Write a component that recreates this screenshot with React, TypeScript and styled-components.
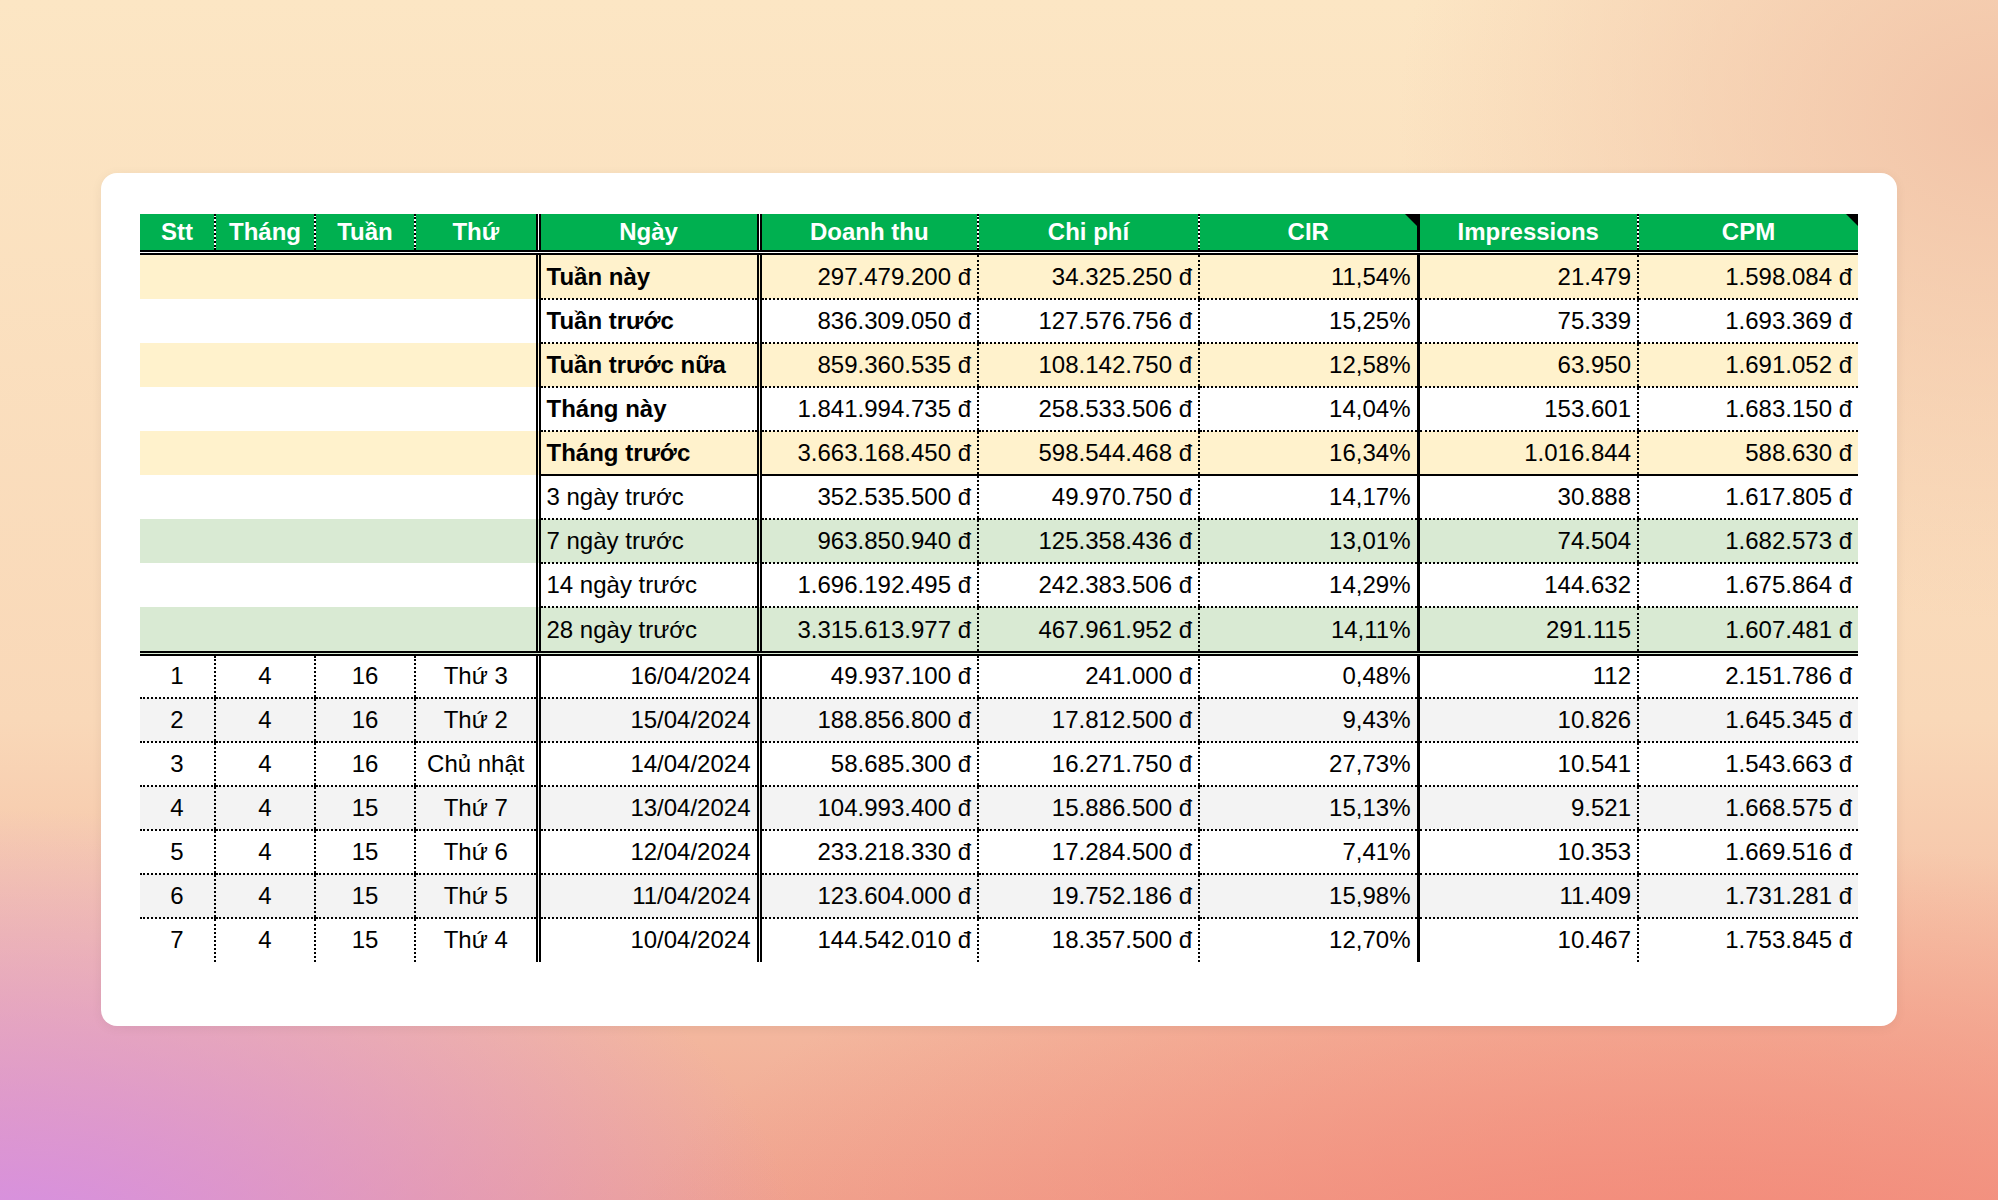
import styled, { createGlobalStyle } from 'styled-components'

const Global = createGlobalStyle`
  html, body { margin: 0; padding: 0; }
  body {
    width: 1998px;
    height: 1200px;
    overflow: hidden;
    font-family: "Liberation Sans", Arial, sans-serif;
    background:
      radial-gradient(ellipse 800px 450px at 0% 105%, #d48ee8 0%, rgba(212,142,232,0) 100%),
      radial-gradient(ellipse 1100px 480px at 85% 110%, #f48676 0%, rgba(244,134,118,0) 100%),
      radial-gradient(ellipse 600px 500px at 100% 10%, #f2c4a8 0%, rgba(242,196,168,0) 100%),
      linear-gradient(180deg, #fce6c4 0%, #f9d8b8 60%, #f0a590 100%);
  }
`

const Page = styled.div`
  display: flex;
  justify-content: center;
  padding-top: 173px;
`

const Card = styled.div`
  width: 1796px;
  height: 853px;
  box-sizing: border-box;
  background: #fff;
  border-radius: 16px;
  padding: 41px 39px 0 39px;
  box-shadow: 0 2px 12px rgba(0, 0, 0, 0.06);
`

const Table = styled.table`
  border-collapse: collapse;
  table-layout: fixed;
  width: 1718px;
  font-size: 24px;
  color: #000;
`

const Head = styled.th<{ $left?: string; $corner?: boolean }>`
  position: relative;
  height: 36px;
  padding: 0;
  background: #00b050;
  color: #fff;
  font-weight: 700;
  font-size: 24px;
  text-align: center;
  border-left: ${p => p.$left ?? '2px dotted #000'};
  border-bottom: 5px double #000;
  &:first-child { border-left: none; }
  &::after {
    content: '';
    display: ${p => (p.$corner ? 'block' : 'none')};
    position: absolute;
    top: 0;
    right: 0;
    border-top: 12px solid #000;
    border-left: 12px solid transparent;
  }
`

const Blank = styled.td<{ $bg: string }>`
  background: ${p => p.$bg};
  height: 44px;
  padding: 0;
`

const Cell = styled.td<{ $bg: string; $left?: string; $align?: string; $bold?: boolean; $bottom?: string }>`
  background: ${p => p.$bg};
  height: 44px;
  box-sizing: border-box;
  padding: 0 6px;
  white-space: nowrap;
  text-align: ${p => p.$align ?? 'right'};
  font-weight: ${p => (p.$bold ? 700 : 400)};
  border-left: ${p => p.$left ?? '2px dotted #000'};
  border-bottom: ${p => p.$bottom ?? '2px dotted #000'};
  &:first-child { border-left: none; }
`

const DOUBLE = '5px double #000'
const THICK = '3px solid #000'

const cols = [75, 100, 100, 123, 221, 219, 221, 219, 220, 220]
const leftBorder = (i: number) =>
  i === 4 || i === 5 ? DOUBLE : i === 8 ? THICK : undefined

const heads = ['Stt', 'Tháng', 'Tuần', 'Thứ', 'Ngày', 'Doanh thu', 'Chi phí', 'CIR', 'Impressions', 'CPM']

const YELLOW = '#fff2cc'
const GREEN = '#d9ead3'
const GREY = '#f3f3f3'

const summary: [string, boolean, string, string[]][] = [
  ['Tuần này', true, YELLOW, ['297.479.200 đ', '34.325.250 đ', '11,54%', '21.479', '1.598.084 đ']],
  ['Tuần trước', true, '#fff', ['836.309.050 đ', '127.576.756 đ', '15,25%', '75.339', '1.693.369 đ']],
  ['Tuần trước nữa', true, YELLOW, ['859.360.535 đ', '108.142.750 đ', '12,58%', '63.950', '1.691.052 đ']],
  ['Tháng này', true, '#fff', ['1.841.994.735 đ', '258.533.506 đ', '14,04%', '153.601', '1.683.150 đ']],
  ['Tháng trước', true, YELLOW, ['3.663.168.450 đ', '598.544.468 đ', '16,34%', '1.016.844', '588.630 đ']],
  ['3 ngày trước', false, '#fff', ['352.535.500 đ', '49.970.750 đ', '14,17%', '30.888', '1.617.805 đ']],
  ['7 ngày trước', false, GREEN, ['963.850.940 đ', '125.358.436 đ', '13,01%', '74.504', '1.682.573 đ']],
  ['14 ngày trước', false, '#fff', ['1.696.192.495 đ', '242.383.506 đ', '14,29%', '144.632', '1.675.864 đ']],
  ['28 ngày trước', false, GREEN, ['3.315.613.977 đ', '467.961.952 đ', '14,11%', '291.115', '1.607.481 đ']],
]

const daily: string[][] = [
  ['1', '4', '16', 'Thứ 3', '16/04/2024', '49.937.100 đ', '241.000 đ', '0,48%', '112', '2.151.786 đ'],
  ['2', '4', '16', 'Thứ 2', '15/04/2024', '188.856.800 đ', '17.812.500 đ', '9,43%', '10.826', '1.645.345 đ'],
  ['3', '4', '16', 'Chủ nhật', '14/04/2024', '58.685.300 đ', '16.271.750 đ', '27,73%', '10.541', '1.543.663 đ'],
  ['4', '4', '15', 'Thứ 7', '13/04/2024', '104.993.400 đ', '15.886.500 đ', '15,13%', '9.521', '1.668.575 đ'],
  ['5', '4', '15', 'Thứ 6', '12/04/2024', '233.218.330 đ', '17.284.500 đ', '7,41%', '10.353', '1.669.516 đ'],
  ['6', '4', '15', 'Thứ 5', '11/04/2024', '123.604.000 đ', '19.752.186 đ', '15,98%', '11.409', '1.731.281 đ'],
  ['7', '4', '15', 'Thứ 4', '10/04/2024', '144.542.010 đ', '18.357.500 đ', '12,70%', '10.467', '1.753.845 đ'],
]

export default function App() {
  return (
    <>
      <Global />
      <Page>
        <Card>
          <Table>
            <colgroup>
              {cols.map((w, i) => <col key={i} style={{ width: w }} />)}
            </colgroup>
            <thead>
              <tr>
                {heads.map((h, i) => (
                  <Head key={h} $left={leftBorder(i)} $corner={h === 'CIR' || h === 'CPM'}>{h}</Head>
                ))}
              </tr>
            </thead>
            <tbody>
              {summary.map(([label, bold, bg, vals], r) => {
                const bottom = r === 4 ? '2px solid #000' : r === 8 ? DOUBLE : undefined
                return (
                  <tr key={label}>
                    <Blank colSpan={4} $bg={bg} style={r === 8 ? { borderBottom: DOUBLE } : undefined} />
                    <Cell $bg={bg} $left={DOUBLE} $align="left" $bold={bold} $bottom={bottom}>{label}</Cell>
                    {vals.map((v, i) => (
                      <Cell key={i} $bg={bg} $left={leftBorder(i + 5)} $bottom={bottom}>{v}</Cell>
                    ))}
                  </tr>
                )
              })}
              {daily.map((row, r) => {
                const bg = r % 2 === 1 ? GREY : '#fff'
                const bottom = r === daily.length - 1 ? 'none' : undefined
                return (
                  <tr key={row[0]}>
                    {row.map((v, i) => (
                      <Cell key={i} $bg={bg} $left={leftBorder(i)} $align={i < 4 ? 'center' : 'right'} $bottom={bottom}>{v}</Cell>
                    ))}
                  </tr>
                )
              })}
            </tbody>
          </Table>
        </Card>
      </Page>
    </>
  )
}
